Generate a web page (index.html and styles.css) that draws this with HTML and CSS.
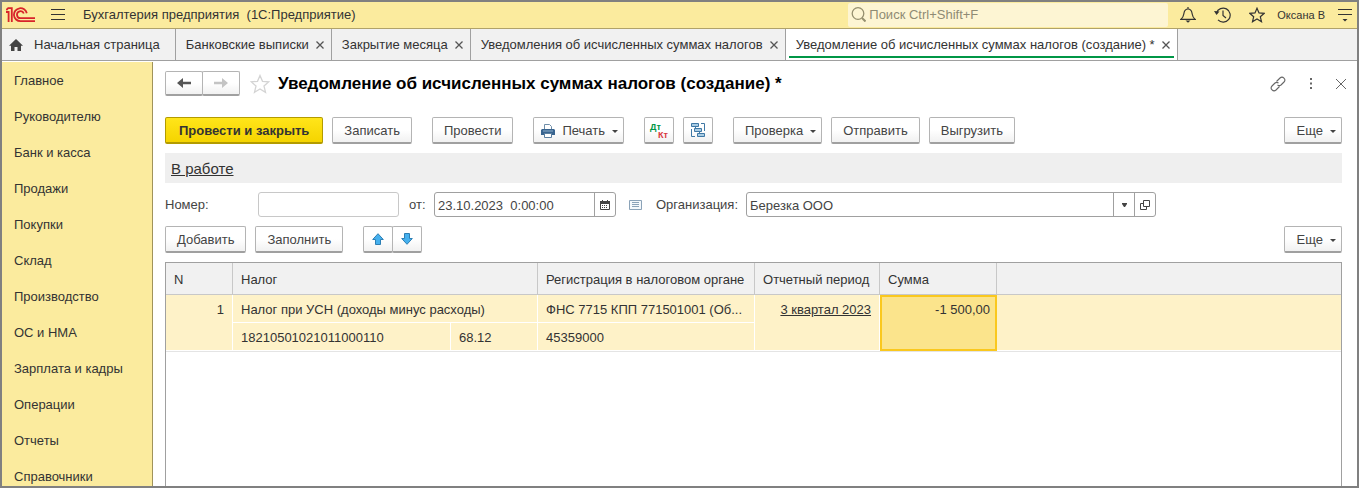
FILE: index.html
```html
<!DOCTYPE html>
<html lang="ru">
<head>
    <meta charset="UTF-8">
    <meta name="viewport" content="width=device-width, initial-scale=1.0">
    <title>Бухгалтерия предприятия (1С:Предприятие)</title>
    <link rel="stylesheet" href="styles.css">
</head>
<body>
    <div class="app">
        <header class="topbar">
            <svg class="logo" width="30" height="16" viewBox="0 0 30 16" fill="none" stroke="#d8232a" stroke-width="1.8">
                <path d="M0 5H2.600V15M.3 3L2.200 1.200H5.800V15"/>
                <path d="M20.800 6.300A6.500 6.500 0 1 0 14.500 14.200H29M17.800 6.500A3.500 3.500 0 1 0 14.500 11.200H29"/>
            </svg>
            <button class="icon-button menu-button" aria-label="Меню">
                <svg width="14" height="12" viewBox="0 0 14 12" stroke="#333"><path d="M0 .5H14M0 5.500H14M0 10.500H14"/></svg>
            </button>
            <div class="app-title">Бухгалтерия предприятия&nbsp; (1С:Предприятие)</div>
            <label class="search">
                <svg width="15" height="15" viewBox="0 0 15 15" fill="none" stroke="#96906f" stroke-width="1.300"><circle cx="7" cy="6.500" r="5.800"/><path d="M11 11L14.500 14.500" stroke-width="2"/></svg>
                <input type="text" placeholder="Поиск Ctrl+Shift+F" aria-label="Поиск">
            </label>
            <div class="top-icons">
                <button class="icon-button" aria-label="Уведомления">
                    <svg width="16" height="16" viewBox="0 0 16 16" fill="none" stroke="#333" stroke-width="1.200"><path d="M1 12.300C3.500 10.500 3.500 8.500 4 6C4.500 3 5.500 2 8 2S11.500 3 12 6C12.500 8.500 12.500 10.500 15 12.300ZM8 2V0"/><path d="M5.500 13.500H10.500L8 15.800Z" fill="#333" stroke="none"/></svg>
                </button>
                <button class="icon-button" aria-label="История">
                    <svg width="17" height="16" viewBox="0 0 17 16" fill="none" stroke="#333" stroke-width="1.200"><path d="M2.500 6A7 7 0 1 1 4 12.800M9 3.500V8.500L12 11"/><path d="M0 4L5.500 4.500L2.500 8Z" fill="#333" stroke="none"/></svg>
                </button>
                <button class="icon-button" aria-label="Избранное">
                    <svg width="16" height="16" viewBox="0 0 16 16" fill="none" stroke="#333" stroke-width="1.200"><path d="M8 1.200L10 5.900L15.200 6.300L11.300 9.700L12.500 14.700L8 12L3.500 14.700L4.700 9.700L.8 6.300L6 5.900Z"/></svg>
                </button>
            </div>
            <a href="#" class="user">Оксана В</a>
            <button class="icon-button" aria-label="Сервис">
                <svg width="14" height="14" viewBox="0 0 14 14" stroke="#333"><path d="M0 1.500H14M0 6.500H14"/><path d="M4.500 11H9.500L7 13.500Z" fill="#333" stroke="none"/></svg>
            </button>
        </header>

        <nav class="tabs">
            <a href="#" class="tab home">
                <svg width="14" height="12" viewBox="0 0 14 12" fill="#444"><path d="M7 0L14 6.800H12V12H8.500V8H5.500V12H2V6.800H0Z"/></svg>
                Начальная страница
            </a>
            <div class="tab"><a href="#">Банковские выписки</a><button class="tab-close" aria-label="Закрыть"><svg width="8" height="8" viewBox="0 0 8 8"><path d="M.5 .5L7.500 7.500M7.500 .5L.5 7.500"/></svg></button></div>
            <div class="tab"><a href="#">Закрытие месяца</a><button class="tab-close" aria-label="Закрыть"><svg width="8" height="8" viewBox="0 0 8 8"><path d="M.5 .5L7.500 7.500M7.500 .5L.5 7.500"/></svg></button></div>
            <div class="tab"><a href="#">Уведомления об исчисленных суммах налогов</a><button class="tab-close" aria-label="Закрыть"><svg width="8" height="8" viewBox="0 0 8 8"><path d="M.5 .5L7.500 7.500M7.500 .5L.5 7.500"/></svg></button></div>
            <div class="tab active"><a href="#">Уведомление об исчисленных суммах налогов (создание) *</a><button class="tab-close" aria-label="Закрыть"><svg width="8" height="8" viewBox="0 0 8 8"><path d="M.5 .5L7.500 7.500M7.500 .5L.5 7.500"/></svg></button></div>
        </nav>

        <div class="body">
            <nav class="sidebar">
                <a href="#">Главное</a>
                <a href="#">Руководителю</a>
                <a href="#">Банк и касса</a>
                <a href="#">Продажи</a>
                <a href="#">Покупки</a>
                <a href="#">Склад</a>
                <a href="#">Производство</a>
                <a href="#">ОС и НМА</a>
                <a href="#">Зарплата и кадры</a>
                <a href="#">Операции</a>
                <a href="#">Отчеты</a>
                <a href="#">Справочники</a>
            </nav>

            <main class="content">
                <div class="title-row">
                    <div class="button-pair nav-pair">
                        <button class="button" aria-label="Назад"><svg width="14" height="10" viewBox="0 0 14 10" fill="#555"><path d="M0 5L6 0V3.800H14V6.200H6V10Z"/></svg></button>
                        <button class="button" aria-label="Вперед"><svg width="14" height="10" viewBox="0 0 14 10" fill="#c4c4c4"><path d="M14 5L8 0V3.800H0V6.200H8V10Z"/></svg></button>
                    </div>
                    <button class="icon-button" aria-label="В избранное">
                        <svg width="20" height="20" viewBox="0 0 20 20" fill="none" stroke="#d4d4d4" stroke-width="1.300"><path d="M10 1.500L12.500 7.300L18.800 7.800L14 12L15.500 18.300L10 14.900L4.500 18.300L6 12L1.200 7.800L7.500 7.300Z"/></svg>
                    </button>
                    <h1>Уведомление об исчисленных суммах налогов (создание) *</h1>
                    <div class="window-icons">
                        <button class="icon-button" aria-label="Ссылка">
                            <svg width="16" height="16" viewBox="0 0 16 16" fill="none" stroke="#666" stroke-width="1.100"><path d="M6.500 5.500L10 2A2.830 2.830 0 0 1 14 6L11 9A2.830 2.830 0 0 1 7.500 9M9.500 10.500L6 14A2.830 2.830 0 0 1 2 10L5 7A2.830 2.830 0 0 1 8.500 7"/></svg>
                        </button>
                        <button class="icon-button" aria-label="Еще">
                            <svg width="4" height="12" viewBox="0 0 4 12" fill="#666"><path d="M1 0H3V2H1ZM1 4.500H3V6.500H1ZM1 9H3V11H1Z"/></svg>
                        </button>
                        <button class="icon-button" aria-label="Закрыть">
                            <svg width="10" height="10" viewBox="0 0 10 10" stroke="#666"><path d="M0 0L10 10M10 0L0 10"/></svg>
                        </button>
                    </div>
                </div>

                <div class="commands">
                    <div class="group">
                        <button class="button primary">Провести и закрыть</button>
                        <button class="button">Записать</button>
                    </div>
                    <button class="button">Провести</button>
                    <button class="button drop print">
                        <svg width="14" height="14" viewBox="0 0 14 14"><path d="M3.500 6V.5H8.500L10.500 2.500V6" fill="#fff" stroke="#6f8ea9"/><path d="M1 5H13L14 6V11H0V6Z" fill="#39648f"/><path d="M2 7H12" stroke="#8fb0cc"/><path d="M3.500 9.500H10.500V13.500H3.500Z" fill="#fff" stroke="#5b7f9f"/></svg>
                        Печать
                    </button>
                    <div class="group">
                        <button class="button square" aria-label="Дт/Кт"><span class="dtkt"><b class="dt">Дт</b><b class="kt">Кт</b></span></button>
                        <button class="button square" aria-label="Структура подчиненности">
                            <svg width="16" height="15" viewBox="0 0 16 15" fill="#a9cce3" stroke="#3f78a5"><path d="M1.500 .5H8.500V3.500H1.500ZM4.500 5.500H11.500V8.500H4.500ZM7.500 10.500H14.500V13.500H7.500Z"/><path d="M5.500 3.500V5.500M9.500 8.500V10.500M11 .5H14.500V8M1.500 6V13.500H5" fill="none"/></svg>
                        </button>
                    </div>
                    <div class="group">
                        <button class="button drop">Проверка</button>
                        <button class="button">Отправить</button>
                        <button class="button">Выгрузить</button>
                    </div>
                    <button class="button drop more">Еще</button>
                </div>

                <div class="status"><a href="#">В работе</a></div>

                <div class="fields">
                    <label for="number" class="number-label">Номер:</label>
                    <input type="text" id="number" class="box number">
                    <label for="date" class="date-label">от:</label>
                    <div class="box date">
                        <input type="text" id="date" value="23.10.2023  0:00:00">
                        <button aria-label="Выбрать дату">
                            <svg width="10" height="10" viewBox="0 0 10 10"><path d="M.5 1.500H9.500V9.500H.5Z" fill="#fff" stroke="#444"/><path d="M0 1H10V4H0ZM2 0H3V2H2ZM7 0H8V2H7Z" fill="#444"/><path d="M2 5.500H8M2 7.500H8" stroke="#444" stroke-dasharray="1 1"/></svg>
                        </button>
                    </div>
                    <svg class="list-icon" width="13" height="10" viewBox="0 0 13 10" fill="none"><path d="M.5 .5H12.500V9.500H.5Z" fill="#f4f8fb" stroke="#8ba3b8"/><path d="M3 2.500H10M3 4.500H10M3 6.500H10" stroke="#8ba3b8"/></svg>
                    <label for="org">Организация:</label>
                    <div class="box org">
                        <input type="text" id="org" value="Березка ООО">
                        <button aria-label="Выбрать"><svg width="5" height="4" viewBox="0 0 5 4" fill="#444"><path d="M0 0H5V1L3 4H2L0 1Z"/></svg></button>
                        <button aria-label="Открыть"><svg width="10" height="10" viewBox="0 0 10 10" fill="none" stroke="#444"><path d="M3.500 .5H9.500V6.500H3.500ZM3 3.500H.5V9.500H6.500V7"/></svg></button>
                    </div>
                </div>

                <div class="commands">
                    <div class="group">
                        <button class="button">Добавить</button>
                        <button class="button">Заполнить</button>
                    </div>
                    <div class="button-pair">
                        <button class="button" aria-label="Вверх"><svg width="12" height="12" viewBox="0 0 12 12" fill="#45b0ee" stroke="#2c7fb4"><path d="M6 .7L11.300 6.500H8.500V11.500H3.500V6.500H.7Z"/></svg></button>
                        <button class="button" aria-label="Вниз"><svg width="12" height="12" viewBox="0 0 12 12" fill="#45b0ee" stroke="#2c7fb4"><path d="M6 11.300L11.300 5.500H8.500V.5H3.500V5.500H.7Z"/></svg></button>
                    </div>
                    <button class="button drop more">Еще</button>
                </div>

                <div class="grid">
                    <table>
                        <colgroup>
                            <col class="col-n">
                            <col class="col-code">
                            <col class="col-account">
                            <col class="col-reg">
                            <col class="col-period">
                            <col class="col-sum">
                            <col>
                        </colgroup>
                        <thead>
                            <tr>
                                <th>N</th>
                                <th colspan="2">Налог</th>
                                <th>Регистрация в налоговом органе</th>
                                <th>Отчетный период</th>
                                <th>Сумма</th>
                                <th></th>
                            </tr>
                        </thead>
                        <tbody>
                            <tr>
                                <td rowspan="2" class="right">1</td>
                                <td colspan="2">Налог при УСН (доходы минус расходы)</td>
                                <td>ФНС 7715 КПП 771501001 (Об...</td>
                                <td rowspan="2" class="right"><a href="#">3 квартал 2023</a></td>
                                <td rowspan="2" class="right selected">-1 500,00</td>
                                <td rowspan="2"></td>
                            </tr>
                            <tr>
                                <td>18210501021011000110</td>
                                <td>68.12</td>
                                <td>45359000</td>
                            </tr>
                        </tbody>
                    </table>
                </div>
            </main>
        </div>
    </div>
</body>
</html>
```
FILE: styles.css
```css
* {
    box-sizing: border-box;
}
body {
    margin: 0;
    font-family: "Liberation Sans", Arial, sans-serif;
    font-size: 13px;
    color: #333;
    background-color: #fff;
}
a {
    color: inherit;
    text-decoration: none;
}
button, input {
    font: inherit;
    color: inherit;
}
svg {
    display: block;
    flex: none;
}
.app {
    display: flex;
    flex-direction: column;
    height: 100vh;
    border: 2px solid #808080;
    overflow: hidden;
}
.icon-button {
    display: flex;
    align-items: center;
    padding: 0;
    border: none;
    background: none;
    cursor: pointer;
}

/* top bar */
.topbar {
    display: flex;
    align-items: center;
    flex: none;
    height: 27px;
    padding: 0 5px 1px 4px;
    background-color: #fbeb9e;
    border-bottom: 1px solid #b0a26a;
}
.menu-button {
    margin-left: 15px;
}
.app-title {
    margin-left: 18px;
}
.search {
    display: flex;
    align-items: center;
    gap: 3px;
    width: 320px;
    height: 24px;
    margin-left: auto;
    padding-left: 3px;
    background-color: #fdf5d3;
    border-radius: 2px;
}
.search input {
    flex: 1;
    min-width: 0;
    padding: 0;
    border: none;
    outline: none;
    background: none;
}
.search input::placeholder {
    color: #8f8b74;
    opacity: 1;
}
.top-icons {
    display: flex;
    gap: 18px;
    margin: 0 12px;
}
.user {
    margin-right: 13px;
    font-size: 11px;
}

/* tabs */
.tabs {
    display: flex;
    flex: none;
    height: 32px;
    background-color: #f1f1f1;
    border-bottom: 1px solid #a0a0a0;
}
.tab {
    display: flex;
    align-items: center;
    gap: 7px;
    padding: 0 7px 0 10px;
    border-right: 1px solid #a0a0a0;
    white-space: nowrap;
}
.home {
    gap: 11px;
    padding: 0 15px 0 7px;
}
.tab.active {
    position: relative;
    background-color: #fff;
}
.tab.active::after {
    content: "";
    position: absolute;
    right: 3px;
    bottom: 2px;
    left: 3px;
    height: 2px;
    background-color: #009646;
}
.tab-close {
    padding: 0;
    border: none;
    background: none;
    stroke: #555;
    stroke-width: 1.3;
}

/* layout */
.body {
    display: flex;
    flex: 1;
    min-height: 0;
    padding-top: 1px;
}
.sidebar {
    flex: none;
    width: 151px;
    padding-top: 1px;
    background-color: #fbeb9e;
    border-right: 1px solid #a0935a;
    overflow: hidden;
}
.sidebar a {
    display: block;
    padding-left: 12px;
    line-height: 36px;
}
.content {
    display: flex;
    flex-direction: column;
    flex: 1;
    min-width: 0;
    padding: 9px 15px 0 12px;
}

/* buttons */
.button {
    display: flex;
    align-items: center;
    justify-content: center;
    height: 27px;
    padding: 1px 11px 0;
    border: 1px solid #b4b4b4;
    border-bottom: 2px solid #a0a0a0;
    border-radius: 2px;
    background: linear-gradient(#fff 50%, #f1f1f1);
    color: #444;
    white-space: nowrap;
    cursor: pointer;
}
.primary {
    padding: 1px 13px 0;
    border-color: #b39b00;
    background: linear-gradient(#ffe51a, #f5d400);
    color: #333;
    font-weight: bold;
}
.drop::after {
    content: "";
    margin: 2px -6px 0 7px;
    border: 3px solid transparent;
    border-top-color: #444;
    border-bottom: none;
}
.print {
    padding-left: 7px;
}
.print svg {
    margin-right: 7px;
}
.square {
    width: 30px;
    padding: 0;
}
.more {
    margin-left: auto;
    padding-left: 12px;
}
.button-pair {
    display: flex;
}
.button-pair .button {
    width: 30px;
    padding: 0;
}
.button-pair .button + .button {
    margin-left: -1px;
}
.nav-pair .button {
    width: 38px;
    height: 25px;
}
.dtkt {
    display: grid;
    width: 18px;
    padding-top: 2px;
    font-size: 9px;
    line-height: 8px;
}
.dt {
    color: #009646;
    text-align: left;
}
.kt {
    color: #d9363e;
    text-align: right;
}

.title-row {
    display: flex;
    align-items: center;
    height: 25px;
}
.title-row > .icon-button {
    margin-left: 10px;
}
h1 {
    margin: 0 0 0 8px;
    font-size: 17px;
    font-weight: bold;
    color: #000;
    white-space: nowrap;
}
.window-icons {
    display: flex;
    align-items: center;
    gap: 23px;
    margin: 0 -4px 0 auto;
}
.commands {
    display: flex;
    gap: 20px;
}
.group {
    display: flex;
    gap: 9px;
}
.title-row + .commands {
    margin-top: 21px;
}
.status {
    height: 30px;
    margin-top: 9px;
    padding-left: 6px;
    background-color: #efefef;
    font-size: 15px;
    line-height: 32px;
}
.status a {
    text-decoration: underline;
}

/* document fields */
.fields {
    display: flex;
    align-items: center;
    height: 25px;
    margin: 9px 0;
    color: #444;
}
.box {
    height: 25px;
    border: 1px solid #a0a0a0;
    border-radius: 3px;
    background-color: #fff;
}
.number-label {
    width: 93px;
}
.number {
    width: 141px;
    border-color: #c8c8c8;
}
.date-label {
    width: 35px;
    padding-left: 10px;
}
.date, .org {
    display: flex;
}
.date {
    width: 182px;
}
.org {
    width: 410px;
    margin-left: 8px;
}
.box input {
    flex: 1;
    min-width: 0;
    padding: 1px 3px 0;
    border: none;
    outline: none;
    background: none;
    white-space: pre;
}
.box button {
    display: flex;
    align-items: center;
    justify-content: center;
    width: 21px;
    padding: 0;
    border: none;
    border-left: 1px solid #a0a0a0;
    background: none;
}
.list-icon {
    margin: 0 14px 0 13px;
}

/* table */
.grid {
    flex: 1;
    min-height: 0;
    margin-top: 9px;
    border: 1px solid #a0a0a0;
    border-bottom: none;
    overflow: hidden;
}
table {
    width: 100%;
    table-layout: fixed;
    border-collapse: separate;
    border-spacing: 0;
    border-bottom: 1px solid #e4e4e4;
}
.col-n { width: 67px; }
.col-code { width: 218px; }
.col-account { width: 87px; }
.col-reg { width: 217px; }
.col-period { width: 125px; }
.col-sum { width: 117px; }
th, td {
    height: 28px;
    padding: 2px 8px 0;
    border-right: 1px solid #fff;
    border-bottom: 1px solid #fff;
    background-color: #fef2c8;
    font-weight: normal;
    text-align: left;
    white-space: nowrap;
}
th {
    height: 32px;
    border-color: #c8c8c8;
    background-color: #f1f1f1;
}
th:last-child {
    border-right: none;
}
td[rowspan] {
    padding-top: 7px;
    vertical-align: top;
}
td[rowspan]:last-child {
    border-right: none;
}
td a {
    text-decoration: underline;
}
.right {
    text-align: right;
}
td.selected {
    padding-right: 7px;
    border-right: none;
    background-color: #fbe48c;
    outline: 2px solid #fac81e;
    outline-offset: -2px;
}
```
